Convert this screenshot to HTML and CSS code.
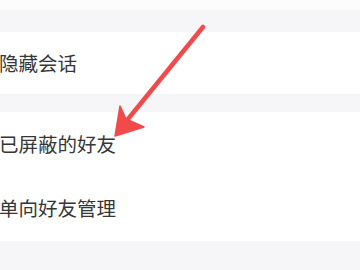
FILE: index.html
```html
<!DOCTYPE html>
<html lang="zh-CN">
<head>
<meta charset="utf-8">
<link rel="stylesheet" href="styles.css">
</head>
<body>
<div class="page">
  <div class="top-strip"></div>
  <div class="gap gap-top"></div>
  <div class="group">
    <div class="row row-first"><span class="label">隐藏会话</span></div>
  </div>
  <div class="gap gap-mid"></div>
  <div class="group">
    <div class="row row-a"><span class="label">已屏蔽的好友</span></div>
    <div class="row row-b"><span class="label">单向好友管理</span></div>
  </div>
  <div class="gap gap-bottom"></div>
  <svg class="arrow" width="360" height="270" viewBox="0 0 360 270">
    <line x1="203" y1="27" x2="124" y2="124" stroke="#f24a4a" stroke-width="4.5" stroke-linecap="round"/>
    <polygon points="115,136 120,106 126,119 144,127" fill="#f24a4a" stroke="#f24a4a" stroke-width="1.5" stroke-linejoin="round"/>
  </svg>
</div>
</body>
</html>
```
FILE: styles.css
```css
html, body {
  margin: 0;
  padding: 0;
  background: #ffffff;
}
.page {
  position: relative;
  width: 360px;
  height: 270px;
  overflow: hidden;
  display: flex;
  flex-direction: column;
  font-family: "Noto Sans CJK SC", "Noto Sans", sans-serif;
}
.top-strip {
  height: 10px;
  background: #fcfcfd;
}
.gap {
  background: #f6f6f8;
}
.gap-top { height: 22px; }
.gap-mid { height: 18px; }
.gap-bottom { flex: 1; }
.group {
  background: #ffffff;
  display: flex;
  flex-direction: column;
}
.row {
  display: flex;
  align-items: center;
  padding-left: 0;
}
.row-first { height: 62px; }
.row-a { height: 63px; }
.row-b { height: 66px; }
.label {
  font-size: 19.5px;
  color: #363636;
  line-height: 1;
  margin-left: -1px;
}
.arrow {
  position: absolute;
  left: 0;
  top: 0;
}
```
